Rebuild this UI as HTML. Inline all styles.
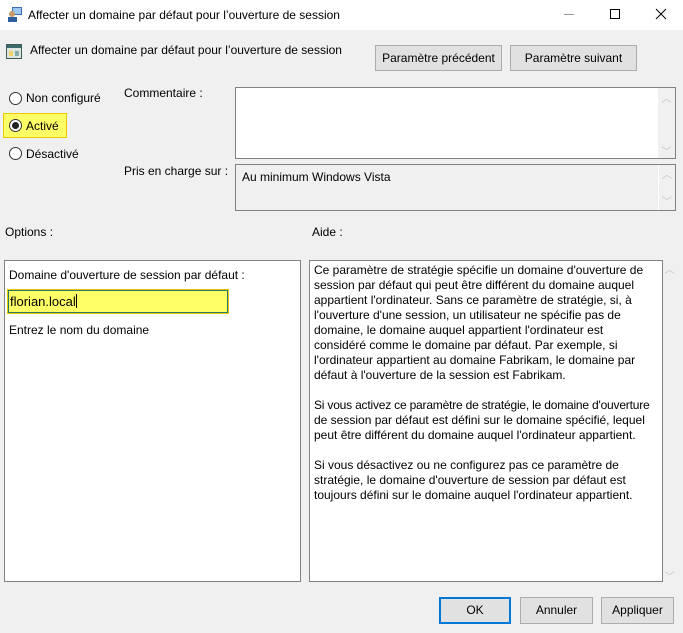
<!DOCTYPE html>
<html><head><meta charset="utf-8"><style>
*{margin:0;padding:0;box-sizing:border-box}
body{width:683px;height:633px;background:#f0f0f0;font-family:"Liberation Sans",sans-serif;font-size:12px;color:#000;position:relative;overflow:hidden}
.a{position:absolute;white-space:nowrap}
.btn{position:absolute;background:#e1e1e1;border:1px solid #adadad;text-align:center;line-height:24px}
.rad{position:absolute;width:13px;height:13px;border:1px solid #333;border-radius:50%;background:#fff}
.sb{position:absolute;background:#f0f0f0;color:#c0c0c0;font-size:10px;text-align:center}
.help div{height:15px;line-height:15px}
</style></head><body>
<div class="a" style="left:0;top:0;width:683px;height:30px;background:#fff"></div>
<svg class="a" style="left:7px;top:6px" width="16" height="16"><rect x="5" y="1" width="10" height="8" fill="#3a6fb5"/><rect x="6" y="2" width="8" height="6" fill="#9cc7f0"/><circle cx="5" cy="8" r="3" fill="#c89a6a"/><rect x="1" y="11" width="9" height="5" fill="#2f5f9f"/></svg>
<div class="a" style="left:28px;top:8px;font-size:12px">Affecter un domaine par défaut pour l’ouverture de session</div>
<div class="a" style="left:564px;top:14px;width:10px;height:1px;background:#999"></div>
<div class="a" style="left:610px;top:9px;width:10px;height:10px;border:1px solid #000"></div>
<svg class="a" style="left:655px;top:8px" width="12" height="12"><path d="M1 1L11 11M11 1L1 11" stroke="#000" stroke-width="1"/></svg>

<svg class="a" style="left:6px;top:43px" width="17" height="17"><rect x="0.5" y="1.5" width="15" height="14" fill="#dfe6e0" stroke="#3d5a55"/><rect x="1" y="2" width="14" height="3" fill="#3d6b70"/><rect x="3" y="8" width="4" height="5" fill="#f3d36b"/><rect x="9" y="8" width="4" height="5" fill="#8aa"/></svg>
<div class="a" style="left:30px;top:43px">Affecter un domaine par défaut pour l’ouverture de session</div>
<div class="btn" style="left:375px;top:45px;width:127px;height:26px">Paramètre précédent</div>
<div class="btn" style="left:510px;top:45px;width:127px;height:26px">Paramètre suivant</div>

<div class="rad" style="left:9px;top:92px"></div>
<div class="a" style="left:26px;top:91px">Non configuré</div>
<div class="a" style="left:3px;top:113px;width:64px;height:25px;background:#ffff66;border:1px solid #e8c800"></div>
<div class="rad" style="left:9px;top:119px"></div>
<div class="a" style="left:12px;top:122px;width:7px;height:7px;border-radius:50%;background:#222"></div>
<div class="a" style="left:26px;top:119px">Activé</div>
<div class="rad" style="left:9px;top:147px"></div>
<div class="a" style="left:26px;top:147px">Désactivé</div>

<div class="a" style="left:124px;top:86px">Commentaire :</div>
<div class="a" style="left:235px;top:87px;width:441px;height:72px;background:#fff;border:1px solid #828282"></div>
<div class="sb" style="left:658px;top:88px;width:17px;height:70px"><div style="margin-top:2px">︿</div><div style="margin-top:38px">﹀</div></div>

<div class="a" style="left:124px;top:164px">Pris en charge sur :</div>
<div class="a" style="left:235px;top:164px;width:441px;height:47px;background:#f0f0f0;border:1px solid #828282"></div>
<div class="a" style="left:658px;top:165px;width:1px;height:45px;background:#fff"></div>
<div class="sb" style="left:660px;top:166px;width:14px;height:44px"><div>︿</div><div style="margin-top:12px">﹀</div></div>
<div class="a" style="left:242px;top:170px">Au minimum Windows Vista</div>

<div class="a" style="left:5px;top:225px">Options :</div>
<div class="a" style="left:312px;top:225px">Aide :</div>

<div class="a" style="left:4px;top:260px;width:297px;height:322px;background:#fff;border:1px solid #828282"></div>
<div class="a" style="left:9px;top:268px">Domaine d'ouverture de session par défaut :</div>
<div class="a" style="left:7px;top:289px;width:222px;height:25px;background:#ffff66;border:1px solid #e8c800"></div>
<div class="a" style="left:8px;top:290px;width:220px;height:23px;border:1px solid #2a7a6a"></div>
<div class="a" style="left:10px;top:294px;font-size:13px">florian.local<span style="display:inline-block;width:1px;height:14px;background:#000;vertical-align:-2px"></span></div>
<div class="a" style="left:9px;top:323px">Entrez le nom du domaine</div>

<div class="a" style="left:309px;top:260px;width:354px;height:322px;background:#fff;border:1px solid #828282"></div>
<div class="sb" style="left:663px;top:261px;width:13px;height:320px"><div>︿</div><div style="margin-top:292px">﹀</div></div>
<div class="a help" style="left:314px;top:263px;font-size:12px">
<div>Ce paramètre de stratégie spécifie un domaine d'ouverture de</div>
<div>session par défaut qui peut être différent du domaine auquel</div>
<div>appartient l'ordinateur. Sans ce paramètre de stratégie, si, à</div>
<div>l'ouverture d'une session, un utilisateur ne spécifie pas de</div>
<div>domaine, le domaine auquel appartient l'ordinateur est</div>
<div>considéré comme le domaine par défaut. Par exemple, si</div>
<div>l'ordinateur appartient au domaine Fabrikam, le domaine par</div>
<div>défaut à l'ouverture de la session est Fabrikam.</div>
<div></div>
<div style="letter-spacing:-0.2px">Si vous activez ce paramètre de stratégie, le domaine d'ouverture</div>
<div>de session par défaut est défini sur le domaine spécifié, lequel</div>
<div>peut être différent du domaine auquel l'ordinateur appartient.</div>
<div></div>
<div>Si vous désactivez ou ne configurez pas ce paramètre de</div>
<div>stratégie, le domaine d'ouverture de session par défaut est</div>
<div>toujours défini sur le domaine auquel l'ordinateur appartient.</div>
</div>

<div class="btn" style="left:439px;top:597px;width:72px;height:27px;border:2px solid #0078d7;line-height:23px">OK</div>
<div class="btn" style="left:520px;top:597px;width:73px;height:27px">Annuler</div>
<div class="btn" style="left:601px;top:597px;width:73px;height:27px">Appliquer</div>
</body></html>
